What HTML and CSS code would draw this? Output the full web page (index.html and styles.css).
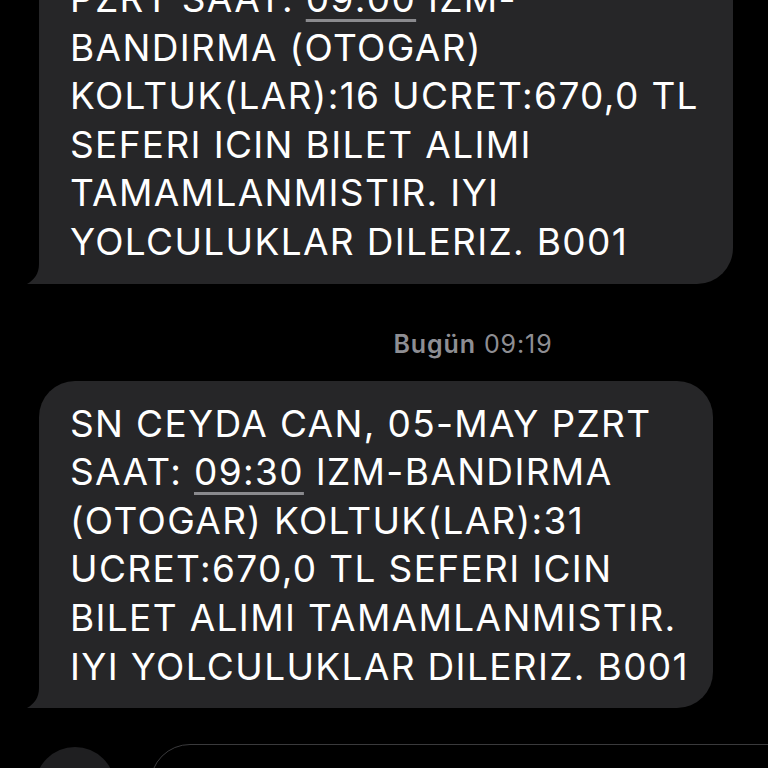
FILE: index.html
```html
<!DOCTYPE html>
<html lang="tr">
<head>
<meta charset="utf-8">
<title>Mesajlar</title>
<link rel="stylesheet" href="styles.css">
</head>
<body>
<div class="screen">
  <div class="thread">
    <div class="bubble bubble-one">
      <p class="msg">PZRT SAAT: <span class="time">09:00</span> IZM-<br>BANDIRMA (OTOGAR)<br>KOLTUK(LAR):16 UCRET:670,0 TL<br>SEFERI ICIN BILET ALIMI<br>TAMAMLANMISTIR. IYI<br>YOLCULUKLAR DILERIZ. B001</p>
      <svg class="tail" viewBox="0 0 48 40" width="48" height="40" aria-hidden="true"><path d="M12 0 V20 C12 30 7 36 0 40 H48 V0 Z" fill="#262628"/></svg>
    </div>
    <div class="stamp"><span class="stamp-day">Bugün</span> 09:19</div>
    <div class="bubble bubble-two">
      <p class="msg">SN CEYDA CAN, 05-MAY PZRT<br>SAAT: <span class="time">09:30</span> IZM-BANDIRMA<br>(OTOGAR) KOLTUK(LAR):31<br>UCRET:670,0 TL SEFERI ICIN<br>BILET ALIMI TAMAMLANMISTIR.<br>IYI YOLCULUKLAR DILERIZ. B001</p>
      <svg class="tail" viewBox="0 0 48 40" width="48" height="40" aria-hidden="true"><path d="M12 0 V20 C12 30 7 36 0 40 H48 V0 Z" fill="#262628"/></svg>
    </div>
  </div>
  <div class="composer">
    <div class="plus"></div>
    <div class="field"></div>
  </div>
</div>
</body>
</html>
```
FILE: styles.css
```css
html, body {
  margin: 0;
  padding: 0;
  background: #000;
}
.screen {
  width: 768px;
  height: 768px;
  overflow: hidden;
  background: #000;
  font-family: Inter, "Liberation Sans", sans-serif;
}
.thread {
  display: flex;
  flex-direction: column;
  margin-top: -44px;
}
.bubble {
  position: relative;
  box-sizing: border-box;
  margin-left: 39px;
  background: #262628;
  border-radius: 36px;
  padding: 19px 0 17px 31px;
}
.bubble-one { width: 694px; }
.bubble-two { width: 674px; }
.msg {
  position: relative;
  z-index: 1;
  margin: 0;
  color: #fff;
  font-size: 37px;
  line-height: 48.6px;
  white-space: nowrap;
  letter-spacing: 1.35px;
}
.time {
  text-decoration: underline;
  text-decoration-color: #8a8a8e;
  text-decoration-thickness: 3px;
  text-underline-offset: 7px;
}
.tail {
  position: absolute;
  left: -12px;
  bottom: 0;
  display: block;
}
.stamp {
  margin: 45px 0 22px;
  padding-left: 178px;
  text-align: center;
  color: #8e8e93;
  font-size: 25px;
  line-height: 30px;
  letter-spacing: 0.9px;
}
.stamp-day { font-weight: 600; }
.composer {
  display: flex;
  align-items: flex-start;
  margin-top: 36px;
}
.plus {
  flex: none;
  width: 80px;
  height: 80px;
  margin: 3px 0 0 35px;
  border-radius: 50%;
  background: #1f1f21;
}
.field {
  flex: none;
  width: 700px;
  height: 80px;
  margin-left: 35px;
  box-sizing: border-box;
  border: 1.5px solid #3a3a3c;
  border-radius: 42px;
}
```
